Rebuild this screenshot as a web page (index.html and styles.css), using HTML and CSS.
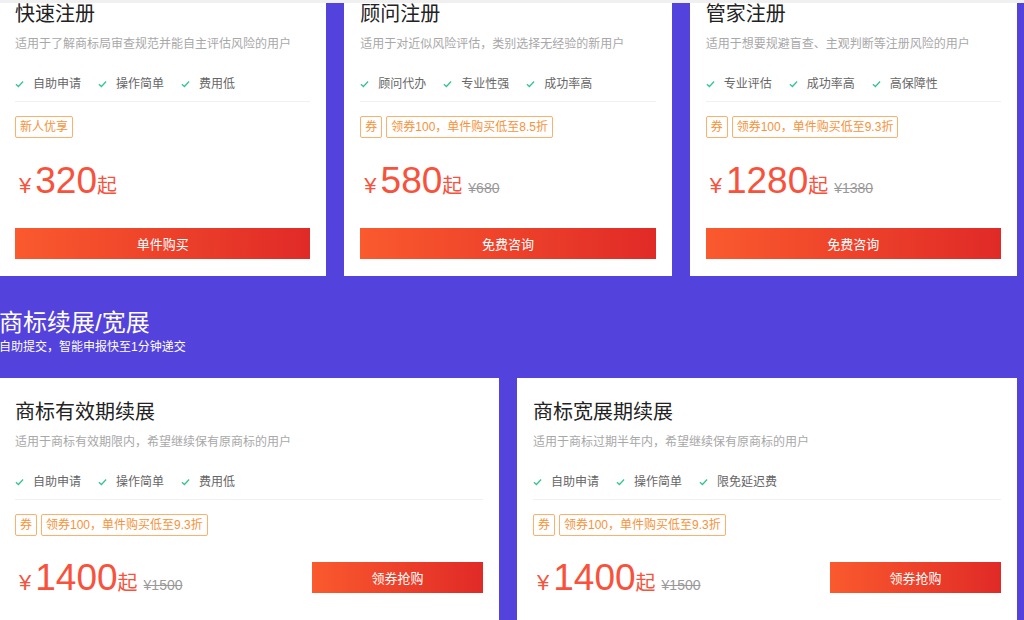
FILE: index.html
```html
<!DOCTYPE html>
<html lang="zh-CN">
<head>
  <meta charset="UTF-8">
  <meta name="viewport" content="width=device-width, initial-scale=1.0">
  <title>商标注册</title>
  <link rel="stylesheet" href="styles.css">
</head>
<body>
  <div class="topbar"></div>
  <div class="page">
    <div class="wrap">
      <div class="row row-3">
        <div class="card">
          <h3>快速注册</h3>
          <p class="desc">适用于了解商标局审查规范并能自主评估风险的用户</p>
          <ul class="feats">
            <li><svg viewBox="0 0 10 8"><path d="M1 4.2 3.8 6.8 9 1.2"/></svg>自助申请</li>
            <li><svg viewBox="0 0 10 8"><path d="M1 4.2 3.8 6.8 9 1.2"/></svg>操作简单</li>
            <li><svg viewBox="0 0 10 8"><path d="M1 4.2 3.8 6.8 9 1.2"/></svg>费用低</li>
          </ul>
          <div class="tags"><span class="tag">新人优享</span></div>
          <div class="price"><span class="cur">¥</span><span class="num">320</span><span class="qi">起</span></div>
          <button class="btn">单件购买</button>
        </div>
        <div class="card">
          <h3>顾问注册</h3>
          <p class="desc">适用于对近似风险评估，类别选择无经验的新用户</p>
          <ul class="feats">
            <li><svg viewBox="0 0 10 8"><path d="M1 4.2 3.8 6.8 9 1.2"/></svg>顾问代办</li>
            <li><svg viewBox="0 0 10 8"><path d="M1 4.2 3.8 6.8 9 1.2"/></svg>专业性强</li>
            <li><svg viewBox="0 0 10 8"><path d="M1 4.2 3.8 6.8 9 1.2"/></svg>成功率高</li>
          </ul>
          <div class="tags"><span class="tag">券</span><span class="tag">领券100，单件购买低至8.5折</span></div>
          <div class="price"><span class="cur">¥</span><span class="num">580</span><span class="qi">起</span><del>¥680</del></div>
          <button class="btn">免费咨询</button>
        </div>
        <div class="card">
          <h3>管家注册</h3>
          <p class="desc">适用于想要规避盲查、主观判断等注册风险的用户</p>
          <ul class="feats">
            <li><svg viewBox="0 0 10 8"><path d="M1 4.2 3.8 6.8 9 1.2"/></svg>专业评估</li>
            <li><svg viewBox="0 0 10 8"><path d="M1 4.2 3.8 6.8 9 1.2"/></svg>成功率高</li>
            <li><svg viewBox="0 0 10 8"><path d="M1 4.2 3.8 6.8 9 1.2"/></svg>高保障性</li>
          </ul>
          <div class="tags"><span class="tag">券</span><span class="tag">领券100，单件购买低至9.3折</span></div>
          <div class="price"><span class="cur">¥</span><span class="num">1280</span><span class="qi">起</span><del>¥1380</del></div>
          <button class="btn">免费咨询</button>
        </div>
      </div>

      <div class="sec-head">
        <h2>商标续展/宽展</h2>
        <p>自助提交，智能申报快至1分钟递交</p>
      </div>

      <div class="row row-2">
        <div class="card">
          <h3>商标有效期续展</h3>
          <p class="desc">适用于商标有效期限内，希望继续保有原商标的用户</p>
          <ul class="feats">
            <li><svg viewBox="0 0 10 8"><path d="M1 4.2 3.8 6.8 9 1.2"/></svg>自助申请</li>
            <li><svg viewBox="0 0 10 8"><path d="M1 4.2 3.8 6.8 9 1.2"/></svg>操作简单</li>
            <li><svg viewBox="0 0 10 8"><path d="M1 4.2 3.8 6.8 9 1.2"/></svg>费用低</li>
          </ul>
          <div class="tags"><span class="tag">券</span><span class="tag">领券100，单件购买低至9.3折</span></div>
          <div class="buy-row">
            <div class="price"><span class="cur">¥</span><span class="num">1400</span><span class="qi">起</span><del>¥1500</del></div>
            <button class="btn btn-sm">领券抢购</button>
          </div>
        </div>
        <div class="card">
          <h3>商标宽展期续展</h3>
          <p class="desc">适用于商标过期半年内，希望继续保有原商标的用户</p>
          <ul class="feats">
            <li><svg viewBox="0 0 10 8"><path d="M1 4.2 3.8 6.8 9 1.2"/></svg>自助申请</li>
            <li><svg viewBox="0 0 10 8"><path d="M1 4.2 3.8 6.8 9 1.2"/></svg>操作简单</li>
            <li><svg viewBox="0 0 10 8"><path d="M1 4.2 3.8 6.8 9 1.2"/></svg>限免延迟费</li>
          </ul>
          <div class="tags"><span class="tag">券</span><span class="tag">领券100，单件购买低至9.3折</span></div>
          <div class="buy-row">
            <div class="price"><span class="cur">¥</span><span class="num">1400</span><span class="qi">起</span><del>¥1500</del></div>
            <button class="btn btn-sm">领券抢购</button>
          </div>
        </div>
      </div>
    </div>
  </div>
</body>
</html>
```

FILE: styles.css
```css
* { box-sizing: border-box; margin: 0; padding: 0; }
body {
  font-family: "Liberation Sans", "Noto Sans CJK SC", sans-serif;
  background: #5442dd;
  overflow: hidden;
}
.topbar {
  position: fixed;
  top: 0; left: 0; right: 0;
  height: 3px;
  background: #f0f0f0;
  z-index: 10;
}
.page { margin-top: -20px; }
.wrap { width: 1018px; margin-left: -1px; }

.row { display: grid; gap: 18px; }
.row-3 { grid-template-columns: repeat(3, 1fr); }
.row-2 { grid-template-columns: repeat(2, 1fr); }
.row-2 .card { padding-bottom: 40px; }

.card {
  background: #fff;
  padding: 20px 16px 17px;
}
.card h3 {
  font-size: 20px;
  line-height: 28px;
  font-weight: normal;
  color: #222;
}
.desc {
  margin-top: 7px;
  font-size: 12px;
  line-height: 18px;
  color: #a8a8a8;
}
.feats {
  list-style: none;
  display: flex;
  gap: 17px;
  margin-top: 21px;
  padding-bottom: 7px;
  border-bottom: 1px solid #f0f0f0;
}
.feats li {
  display: flex;
  align-items: center;
  font-size: 12px;
  line-height: 20px;
  color: #666;
}
.feats svg {
  width: 9px;
  height: 8px;
  margin-right: 9px;
  fill: none;
  stroke: #33c68e;
  stroke-width: 1.4;
}
.tags {
  display: flex;
  gap: 4px;
  margin-top: 14px;
}
.tag {
  height: 22px;
  line-height: 20px;
  padding: 0 4px;
  font-size: 12px;
  color: #f7923a;
  border: 1px solid #f9b16c;
  border-radius: 2px;
}
.price {
  display: flex;
  align-items: baseline;
  margin-top: 24px;
  color: #f8523c;
  line-height: 1;
}
.price .cur { font-size: 22px; margin: 0 4px; }
.price .num { font-size: 37px; }
.price .qi { font-size: 20px; }
.price del {
  margin-left: 6px;
  font-size: 14px;
  color: #999;
}
.btn {
  display: block;
  width: 100%;
  height: 31px;
  margin-top: 29px;
  border: none;
  background: linear-gradient(90deg, #fa5a2e, #e02a27);
  color: #fff;
  font-family: inherit;
  font-size: 13px;
  cursor: pointer;
}
.buy-row {
  display: flex;
  justify-content: space-between;
  align-items: center;
  margin-top: 23px;
}
.buy-row .price { margin-top: 0; }
.btn-sm { width: 171px; margin-top: 0; }

.sec-head {
  padding: 31px 0 23px;
  color: #fff;
}
.sec-head h2 {
  font-size: 24px;
  line-height: 32px;
  font-weight: normal;
}
.sec-head p {
  font-size: 12px;
  line-height: 16px;
}
```
